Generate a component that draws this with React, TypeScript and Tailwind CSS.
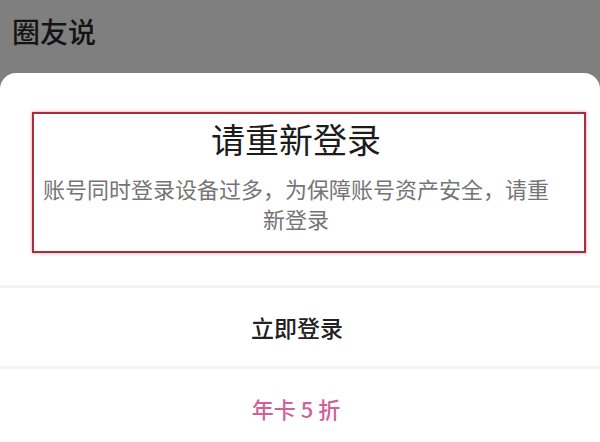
import React from "react";

export default function App() {
  const font = { fontFamily: '"Noto Sans CJK SC", "Noto Sans", sans-serif' };
  return (
    <div
      className="w-[600px] h-[442px] bg-[#7f7f7f] overflow-hidden flex flex-col font-['Noto_Sans_CJK_SC',sans-serif]"
      style={font}
    >
      <div className="h-[73px] shrink-0 pl-[12px] pt-[12px]">
        <div className="text-[28px] leading-[38px] font-medium text-[#141414]">圈友说</div>
      </div>
      <div className="flex-1 bg-white rounded-t-[16px] flex flex-col pt-[39px]">
        <div className="ml-[32px] mr-[14px] h-[141px] border-[2.5px] border-[#a52f3f] shadow-[0_0_3px_rgba(230,120,130,0.8)] flex flex-col items-center pr-[26px] pt-[5px]">
          <div className="text-[34px] leading-[40px] text-[#1c1c1c]">请重新登录</div>
          <div className="mt-[14px] w-[516px] text-center text-[22px] leading-[30px] text-[#757575]">
            账号同时登录设备过多，为保障账号资产安全，请重新登录
          </div>
        </div>
        <div className="mt-[32px] h-[3px] bg-[#f3f3f3]" />
        <div className="h-[78px] flex items-center justify-center pr-[6px]">
          <span className="text-[23px] font-medium text-[#222222]">立即登录</span>
        </div>
        <div className="h-[3px] bg-[#f3f3f3]" />
        <div className="h-[78px] flex items-center justify-center pr-[8px]">
          <span className="text-[22px] font-medium text-[#d0609a]">
            年卡<span className="mx-[5px]">5</span>折
          </span>
        </div>
      </div>
    </div>
  );
}
